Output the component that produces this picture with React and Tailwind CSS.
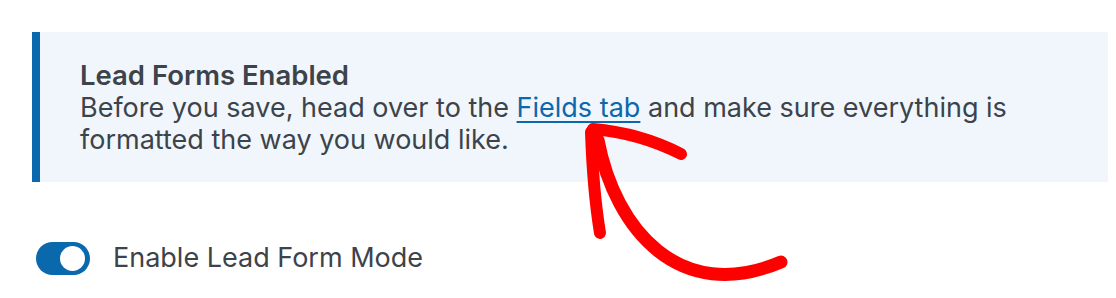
export default function App() {
  return (
    <div className="relative h-[298px] w-[1116px] overflow-hidden bg-white font-['Inter','Liberation_Sans',sans-serif] text-[#3c434a]">
      <div className="pt-8 pl-8 pr-2">
        <div className="border-l-8 border-[#0a68ac] bg-[#f0f6fc] pt-[27px] pb-[25px] pl-10 pr-6 text-[27px] leading-[32.5px]">
          <div className="font-semibold text-[27.5px]">Lead Forms Enabled</div>
          <div>
            Before you save, head over to the{' '}
            <a href="#" className="text-[#0a68ac] underline underline-offset-[4px] decoration-[1.5px]">
              Fields tab
            </a>{' '}
            and make sure everything is formatted the way you would like.
          </div>
        </div>
      </div>

      <div className="mt-[60px] ml-9 flex items-center gap-[23px]">
        <button className="flex h-[33px] w-[54px] items-center justify-end rounded-full bg-[#0a68ac] pr-[5px]">
          <span className="block h-[25px] w-[25px] rounded-full bg-white" />
        </button>
        <span className="text-[27px] leading-[32px]">Enable Lead Form Mode</span>
      </div>

      {/* hand drawn arrow over the notice */}
      <svg className="pointer-events-none absolute left-0 top-0" width="1116" height="298" viewBox="0 0 1116 298">
        <g fill="none" stroke="#ff0000" strokeLinecap="round" strokeLinejoin="round">
          <path d="M591 132 Q593 190 600 233" strokeWidth="12" />
          <path d="M593 129 Q640 133 681 154" strokeWidth="12" />
          <path d="M598 140 C615 230 680 305 781 262" strokeWidth="13" />
        </g>
      </svg>
    </div>
  )
}
